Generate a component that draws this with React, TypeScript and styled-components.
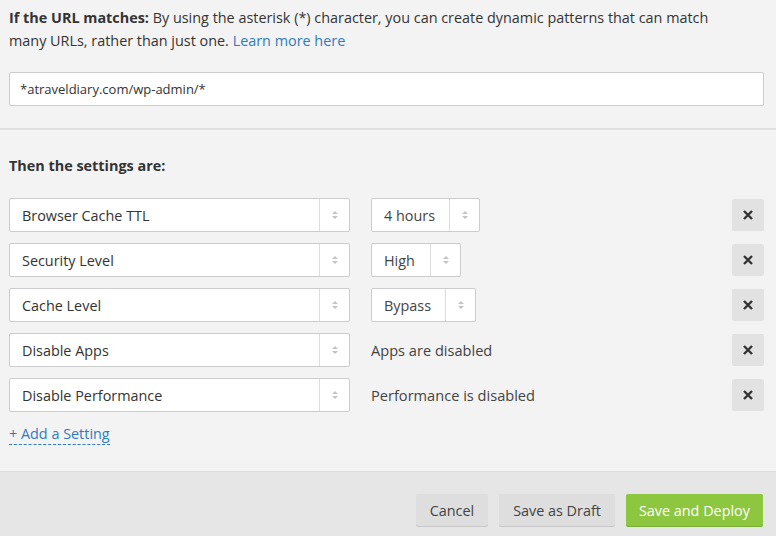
import React from 'react';
import styled, { createGlobalStyle } from 'styled-components';

const Global = createGlobalStyle`
  html, body { margin: 0; padding: 0; background: #f3f3f3; }
  body { font-family: "Open Sans", "Liberation Sans", sans-serif; color: #333; font-size: 14px; }
`;

const Page = styled.div`
  width: 776px;
  height: 536px;
  display: flex;
  flex-direction: column;
  background: #f3f3f3;
`;

const Top = styled.div`
  padding: 6px 12px 22px 9px;
  border-bottom: 2px solid #e0e0e0;
`;

const Intro = styled.p`
  margin: 0 0 20px;
  max-width: 735px;
  line-height: 23px;
  font-size: 14.4px;
  color: #333;
  b { font-weight: 700; }
  a { color: #2f7bbf; text-decoration: none; }
`;

const UrlInput = styled.div`
  height: 32px;
  border: 1px solid #ccc;
  background: #fff;
  border-radius: 2px;
  display: flex;
  align-items: center;
  padding-left: 10px;
  font-size: 13px;
  color: #333;
`;

const Settings = styled.div`
  flex: 1;
  padding: 26px 12px 0 9px;
`;

const Heading = styled.div`
  font-weight: 700;
  font-size: 14.4px;
  margin-bottom: 23px;
`;

const Rows = styled.div`
  display: flex;
  flex-direction: column;
  gap: 11px;
`;

const Row = styled.div`
  display: flex;
  align-items: center;
  height: 34px;
`;

const Select = styled.div<{ $w: number }>`
  width: ${({ $w }) => $w}px;
  height: 34px;
  box-sizing: border-box;
  border: 1px solid #ccc;
  border-radius: 2px;
  background: #fff;
  display: flex;
  align-items: stretch;
  font-size: 14.4px;
`;

const SelectText = styled.div`
  flex: 1;
  display: flex;
  align-items: center;
  padding-left: 12px;
`;

const Arrow = styled.div`
  width: 29px;
  border-left: 1px solid #ddd;
  display: flex;
  align-items: center;
  justify-content: center;
`;

const Value = styled.div`
  margin-left: 21px;
  display: flex;
  align-items: center;
  font-size: 14.6px;
  color: #444;
`;

const Remove = styled.button`
  margin-left: auto;
  width: 32px;
  height: 32px;
  border: none;
  border-radius: 2px;
  background: #e2e2e2;
  display: flex;
  align-items: center;
  justify-content: center;
  padding: 0;
`;

const AddLink = styled.a`
  display: inline-block;
  margin-top: 12px;
  color: #2f7bbf;
  font-size: 14.4px;
  text-decoration: none;
  border-bottom: 1px dashed #2f7bbf;
  padding-bottom: 1px;
`;

const Footer = styled.div`
  height: 65px;
  background: #e6e6e6;
  border-top: 1px solid #ddd;
  display: flex;
  justify-content: flex-end;
  align-items: flex-start;
  gap: 11px;
  padding: 22px 13px 0 0;
  box-sizing: border-box;
`;

const Btn = styled.button<{ $primary?: boolean }>`
  height: 32px;
  padding: 0 ${({ $primary }) => ($primary ? 13 : 14)}px;
  border: none;
  border-radius: 2px;
  font-family: inherit;
  font-size: 14.4px;
  color: ${({ $primary }) => ($primary ? '#fff' : '#444')};
  background: ${({ $primary }) => ($primary ? '#8dc63f' : '#dedede')};
  box-shadow: 0 1px 0 ${({ $primary }) => ($primary ? '#7aad33' : '#c8c8c8')};
`;

const Updown = () => (
  <svg width="8" height="12" viewBox="0 0 8 12">
    <path d="M1 5 L4 2 L7 5 Z M1 7 L4 10 L7 7 Z" fill="#c4c4c4" />
  </svg>
);

const Cross = () => (
  <svg width="12" height="12" viewBox="0 0 12 12">
    <path d="M2 2 L10 10 M10 2 L2 10" stroke="#333" strokeWidth="2.4" />
  </svg>
);

const rows: { name: string; value: string; sel?: number }[] = [
  { name: 'Browser Cache TTL', value: '4 hours', sel: 109 },
  { name: 'Security Level', value: 'High', sel: 90 },
  { name: 'Cache Level', value: 'Bypass', sel: 105 },
  { name: 'Disable Apps', value: 'Apps are disabled' },
  { name: 'Disable Performance', value: 'Performance is disabled' },
];

export default function App() {
  return (
    <Page>
      <Global />
      <Top>
        <Intro>
          <b>If the URL matches:</b> By using the asterisk (*) character, you can create dynamic patterns that can match
          many URLs, rather than just one. <a href="#">Learn more here</a>
        </Intro>
        <UrlInput>*atraveldiary.com/wp-admin/*</UrlInput>
      </Top>
      <Settings>
        <Heading>Then the settings are:</Heading>
        <Rows>
          {rows.map((r) => (
            <Row key={r.name}>
              <Select $w={341}>
                <SelectText>{r.name}</SelectText>
                <Arrow><Updown /></Arrow>
              </Select>
              {r.sel ? (
                <Value>
                  <Select $w={r.sel}>
                    <SelectText>{r.value}</SelectText>
                    <Arrow><Updown /></Arrow>
                  </Select>
                </Value>
              ) : (
                <Value>{r.value}</Value>
              )}
              <Remove><Cross /></Remove>
            </Row>
          ))}
        </Rows>
        <AddLink href="#">+ Add a Setting</AddLink>
      </Settings>
      <Footer>
        <Btn>Cancel</Btn>
        <Btn>Save as Draft</Btn>
        <Btn $primary>Save and Deploy</Btn>
      </Footer>
    </Page>
  );
}
